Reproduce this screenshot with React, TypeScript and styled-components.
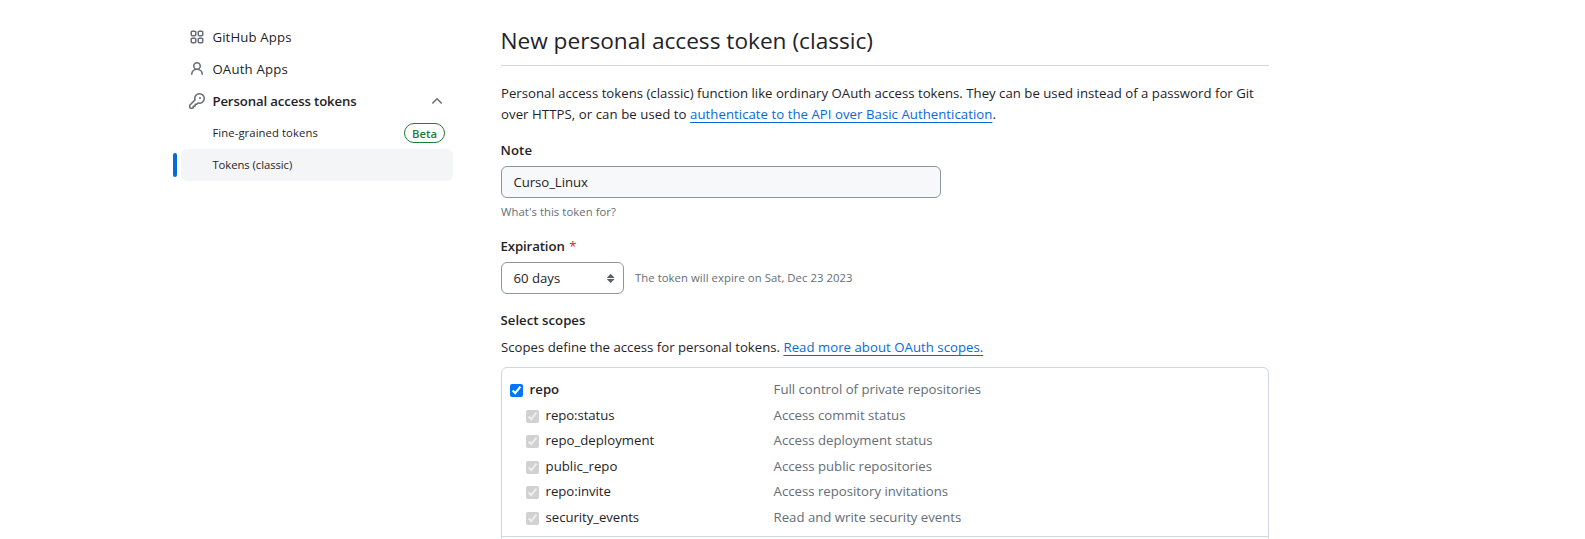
import React from "react";
import styled, { createGlobalStyle, css } from "styled-components";

const color = {
  fg: "#1f2328",
  muted: "#656d76",
  accent: "#0969da",
  border: "#d0d7de",
  control: "#8c959f",
  success: "#1a7f37",
  danger: "#cf222e",
};

const GlobalStyle = createGlobalStyle`
  *, *::before, *::after { box-sizing: border-box; }
  body {
    margin: 0;
    background: #fff;
    color: ${color.fg};
    font-family: "Open Sans", "Noto Sans", sans-serif;
    font-size: 13.2px;
    line-height: 20px;
  }
`;

type Tracked = { $track?: number };
const tracked = css<Tracked>`
  letter-spacing: ${(p) => p.$track ?? 0}px;
`;

const Page = styled.div`
  display: flex;
  gap: 48px;
  height: 539px;
  padding-left: 173px;
  overflow: hidden;
`;

const Sidebar = styled.nav`
  width: 280px;
  padding-top: 21px;
`;

const NavList = styled.ul`
  margin: 0;
  padding: 0;
  list-style: none;
`;

const NavItem = styled.li<{ $active?: boolean }>`
  display: flex;
  align-items: center;
  height: 32px;

  &::before {
    content: "";
    width: 4px;
    height: 24px;
    margin-right: 4px;
    border-radius: 6px;
    background: ${(p) => (p.$active ? color.accent : "transparent")};
  }
`;

const NavLink = styled.a<{ $active?: boolean; $nested?: boolean }>`
  display: flex;
  flex: 1;
  align-items: center;
  gap: 7.4px;
  height: 32px;
  padding: 0 8px 0 ${(p) => (p.$nested ? 31.4 : 8)}px;
  border-radius: 6px;
  background: ${(p) => (p.$active ? "#f4f5f7" : "transparent")};
  color: ${color.fg};
`;

const NavLabel = styled.span<Tracked & { $bold?: boolean; $small?: boolean }>`
  flex: 1;
  white-space: nowrap;
  font-size: ${(p) => (p.$small ? 11.3 : 13.2)}px;
  font-weight: ${(p) => (p.$bold ? 600 : 400)};
  ${tracked}
`;

const Icon = styled.svg<{ $color?: string }>`
  flex: none;
  width: 16px;
  height: 16px;
  fill: ${(p) => p.$color ?? color.muted};
`;

const Badge = styled.span`
  width: 41px;
  height: 20px;
  border: 1px solid ${color.success};
  border-radius: 10px;
  color: ${color.success};
  font-size: 11.3px;
  font-weight: 600;
  line-height: 19px;
  text-align: center;
`;

const Main = styled.main`
  width: 768px;
`;

const Title = styled.h1`
  margin: 25px 0 0;
  padding-bottom: 9px;
  border-bottom: 1px solid ${color.border};
  font-size: 22.65px;
  font-weight: 400;
  line-height: 31px;
  text-indent: -0.6px;
`;

const Intro = styled.p`
  margin: 17px 0 0;
  line-height: 21px;
  white-space: nowrap;
`;

const Run = styled.span<Tracked>`
  ${tracked}
`;

const Link = styled.a<Tracked>`
  color: ${color.accent};
  text-decoration: underline;
  text-decoration-thickness: 1px;
  text-underline-offset: 3px;
  text-decoration-skip-ink: none;
  ${tracked}
`;

const Label = styled.label<Tracked & { $top: number }>`
  display: block;
  margin-top: ${(p) => p.$top}px;
  font-weight: 600;
  text-indent: -0.5px;
  ${tracked}
`;

const Required = styled.span`
  margin-left: 4.5px;
  color: ${color.danger};
  font-weight: 400;
`;

const TextInput = styled.input`
  display: block;
  width: 440px;
  height: 32px;
  margin-top: 6px;
  padding: 0 11.4px;
  border: 1px solid ${color.control};
  border-radius: 6px;
  outline: none;
  background: #f6f8fa;
  color: ${color.fg};
  font: inherit;
  letter-spacing: -0.05px;
  line-height: 30px;
`;

const Hint = styled.p`
  margin: 5px 0 0;
  color: ${color.muted};
  font-size: 11.3px;
  letter-spacing: 0.06px;
  line-height: 17px;
`;

const ExpirationRow = styled.div`
  display: flex;
  gap: 11px;
  margin-top: 6px;
`;

const Select = styled.button`
  display: flex;
  align-items: center;
  justify-content: space-between;
  width: 123px;
  height: 32px;
  padding: 0 4px 0 11.4px;
  border: 1px solid ${color.control};
  border-radius: 6px;
  background: #fff;
  color: ${color.fg};
  font: inherit;
  line-height: 30px;
`;

const ExpirationNote = styled.span`
  color: ${color.muted};
  font-size: 11.3px;
  letter-spacing: 0.06px;
  line-height: 31px;
`;

const ScopesText = styled.p`
  margin: 7px 0 0;
  white-space: nowrap;
`;

const ScopeBox = styled.div`
  height: 400px;
  margin-top: 10px;
  border: 1px solid ${color.border};
  border-radius: 6px;
`;

const ScopeGroup = styled.div`
  height: 169px;
  padding: 11px 8px 0;
  border-bottom: 1px solid ${color.border};
`;

const ScopeRow = styled.label<{ $nested?: boolean }>`
  display: grid;
  grid-template-columns: 13px ${(p) => (p.$nested ? 221.4 : 237.4)}px 1fr;
  column-gap: 6.6px;
  height: ${(p) => (p.$nested ? 25.5 : 25.9)}px;
  margin-left: ${(p) => (p.$nested ? 16 : 0)}px;
`;

const Checkbox = styled.input`
  width: 13px;
  height: 13px;
  margin: 5px 0 0;
`;

const ScopeName = styled.span<Tracked & { $bold?: boolean }>`
  font-weight: ${(p) => (p.$bold ? 600 : 400)};
  ${tracked}
`;

const ScopeDescription = styled.span`
  color: ${color.muted};
`;

const icons = {
  apps: "M1.5 3.25c0-.966.784-1.75 1.75-1.75h2.5c.966 0 1.75.784 1.75 1.75v2.5A1.75 1.75 0 0 1 5.75 7.5h-2.5A1.75 1.75 0 0 1 1.5 5.75Zm7 0c0-.966.784-1.75 1.75-1.75h2.5c.966 0 1.75.784 1.75 1.75v2.5a1.75 1.75 0 0 1-1.75 1.75h-2.5A1.75 1.75 0 0 1 8.5 5.75Zm-7 7c0-.966.784-1.75 1.75-1.75h2.5c.966 0 1.75.784 1.75 1.75v2.5a1.75 1.75 0 0 1-1.75 1.75h-2.5a1.75 1.75 0 0 1-1.75-1.75Zm7 0c0-.966.784-1.75 1.75-1.75h2.5c.966 0 1.75.784 1.75 1.75v2.5a1.75 1.75 0 0 1-1.75 1.75h-2.5a1.75 1.75 0 0 1-1.75-1.75ZM3.25 3a.25.25 0 0 0-.25.25v2.5c0 .138.112.25.25.25h2.5A.25.25 0 0 0 6 5.75v-2.5A.25.25 0 0 0 5.75 3Zm7 0a.25.25 0 0 0-.25.25v2.5c0 .138.112.25.25.25h2.5a.25.25 0 0 0 .25-.25v-2.5a.25.25 0 0 0-.25-.25Zm-7 7a.25.25 0 0 0-.25.25v2.5c0 .138.112.25.25.25h2.5a.25.25 0 0 0 .25-.25v-2.5a.25.25 0 0 0-.25-.25Zm7 0a.25.25 0 0 0-.25.25v2.5c0 .138.112.25.25.25h2.5a.25.25 0 0 0 .25-.25v-2.5a.25.25 0 0 0-.25-.25Z",
  person:
    "M10.561 8.073a6.005 6.005 0 0 1 3.432 5.142.75.75 0 1 1-1.498.07 4.5 4.5 0 0 0-8.99 0 .75.75 0 0 1-1.498-.07 6.004 6.004 0 0 1 3.431-5.142 3.999 3.999 0 1 1 5.123 0ZM10.5 5a2.5 2.5 0 1 0-5 0 2.5 2.5 0 0 0 5 0Z",
  key: "M10.5 0a5.499 5.499 0 1 1-1.288 10.848l-.932.932a.749.749 0 0 1-.53.22H7v.75a.749.749 0 0 1-.22.53l-.5.5a.749.749 0 0 1-.53.22H5v.75a.749.749 0 0 1-.22.53l-.5.5a.749.749 0 0 1-.53.22h-2A1.75 1.75 0 0 1 0 14.25v-2c0-.199.079-.389.22-.53l4.932-4.932A5.5 5.5 0 0 1 10.5 0Zm-4 5.5c-.001.431.069.86.205 1.269a.75.75 0 0 1-.181.768L1.5 12.56v1.69c0 .138.112.25.25.25h1.69l.06-.06v-1.19a.75.75 0 0 1 .75-.75h1.19l.06-.06v-1.19a.75.75 0 0 1 .75-.75h1.19l1.023-1.025a.75.75 0 0 1 .768-.18A4 4 0 1 0 6.5 5.5ZM11 6a1 1 0 1 1 0-2 1 1 0 0 1 0 2Z",
  chevronUp:
    "M3.22 10.53a.749.749 0 0 1 0-1.06l4.25-4.25a.749.749 0 0 1 1.06 0l4.25 4.25a.749.749 0 1 1-1.06 1.06L8 6.811 4.28 10.53a.749.749 0 0 1-1.06 0Z",
  updown:
    "m4.074 9.427 3.396 3.396a.25.25 0 0 0 .354 0l3.396-3.396A.25.25 0 0 0 11.043 9H4.251a.25.25 0 0 0-.177.427Zm0-1.957L7.47 4.073a.25.25 0 0 1 .354 0L11.22 7.47a.25.25 0 0 1-.177.426H4.251a.25.25 0 0 1-.177-.426Z",
};

const Octicon = ({ name, fill }: { name: keyof typeof icons; fill?: string }) => (
  <Icon viewBox="0 0 16 16" aria-hidden="true" $color={fill}>
    <path fillRule="evenodd" d={icons[name]} />
  </Icon>
);

const scopes = [
  { name: "repo:status", description: "Access commit status", track: -0.08 },
  { name: "repo_deployment", description: "Access deployment status", track: 0.02 },
  { name: "public_repo", description: "Access public repositories", track: 0 },
  { name: "repo:invite", description: "Access repository invitations", track: -0.04 },
  { name: "security_events", description: "Read and write security events", track: -0.06 },
];

export default function App() {
  return (
    <>
      <GlobalStyle />
      <Page>
        <Sidebar>
          <NavList>
            <NavItem>
              <NavLink>
                <Octicon name="apps" />
                <NavLabel $track={0.15}>GitHub Apps</NavLabel>
              </NavLink>
            </NavItem>
            <NavItem>
              <NavLink>
                <Octicon name="person" />
                <NavLabel $track={0.2}>OAuth Apps</NavLabel>
              </NavLink>
            </NavItem>
            <NavItem>
              <NavLink>
                <Octicon name="key" />
                <NavLabel $bold $track={-0.12}>Personal access tokens</NavLabel>
                <Octicon name="chevronUp" />
              </NavLink>
            </NavItem>
            <NavItem>
              <NavLink $nested>
                <NavLabel $small $track={0.08}>Fine-grained tokens</NavLabel>
                <Badge>Beta</Badge>
              </NavLink>
            </NavItem>
            <NavItem $active>
              <NavLink $nested $active>
                <NavLabel $small $track={-0.06}>Tokens (classic)</NavLabel>
              </NavLink>
            </NavItem>
          </NavList>
        </Sidebar>

        <Main>
          <Title>New personal access token (classic)</Title>
          <Intro>
            <Run $track={0.01}>
              Personal access tokens (classic) function like ordinary OAuth access tokens. They can be used instead of a
              password for Git
            </Run>
            <br />
            <Run $track={0.065}>over HTTPS, or can be used to </Run>
            <Link $track={0.04}>authenticate to the API over Basic Authentication</Link>.
          </Intro>

          <Label $top={15} $track={0.1} htmlFor="note">Note</Label>
          <TextInput id="note" defaultValue="Curso_Linux" />
          <Hint>What's this token for?</Hint>

          <Label $top={16} $track={-0.1}>
            Expiration<Required>*</Required>
          </Label>
          <ExpirationRow>
            <Select type="button">
              60 days
              <Octicon name="updown" fill="#57606a" />
            </Select>
            <ExpirationNote>The token will expire on Sat, Dec 23 2023</ExpirationNote>
          </ExpirationRow>

          <Label as="div" $top={16} $track={0.03}>Select scopes</Label>
          <ScopesText>
            Scopes define the access for personal tokens. <Link $track={0.03}>Read more about OAuth scopes.</Link>
          </ScopesText>

          <ScopeBox>
            <ScopeGroup>
              <ScopeRow>
                <Checkbox type="checkbox" defaultChecked />
                <ScopeName $bold>repo</ScopeName>
                <ScopeDescription>Full control of private repositories</ScopeDescription>
              </ScopeRow>
              {scopes.map((s) => (
                <ScopeRow key={s.name} $nested>
                  <Checkbox type="checkbox" defaultChecked disabled />
                  <ScopeName $track={s.track}>{s.name}</ScopeName>
                  <ScopeDescription>{s.description}</ScopeDescription>
                </ScopeRow>
              ))}
            </ScopeGroup>
          </ScopeBox>
        </Main>
      </Page>
    </>
  );
}
